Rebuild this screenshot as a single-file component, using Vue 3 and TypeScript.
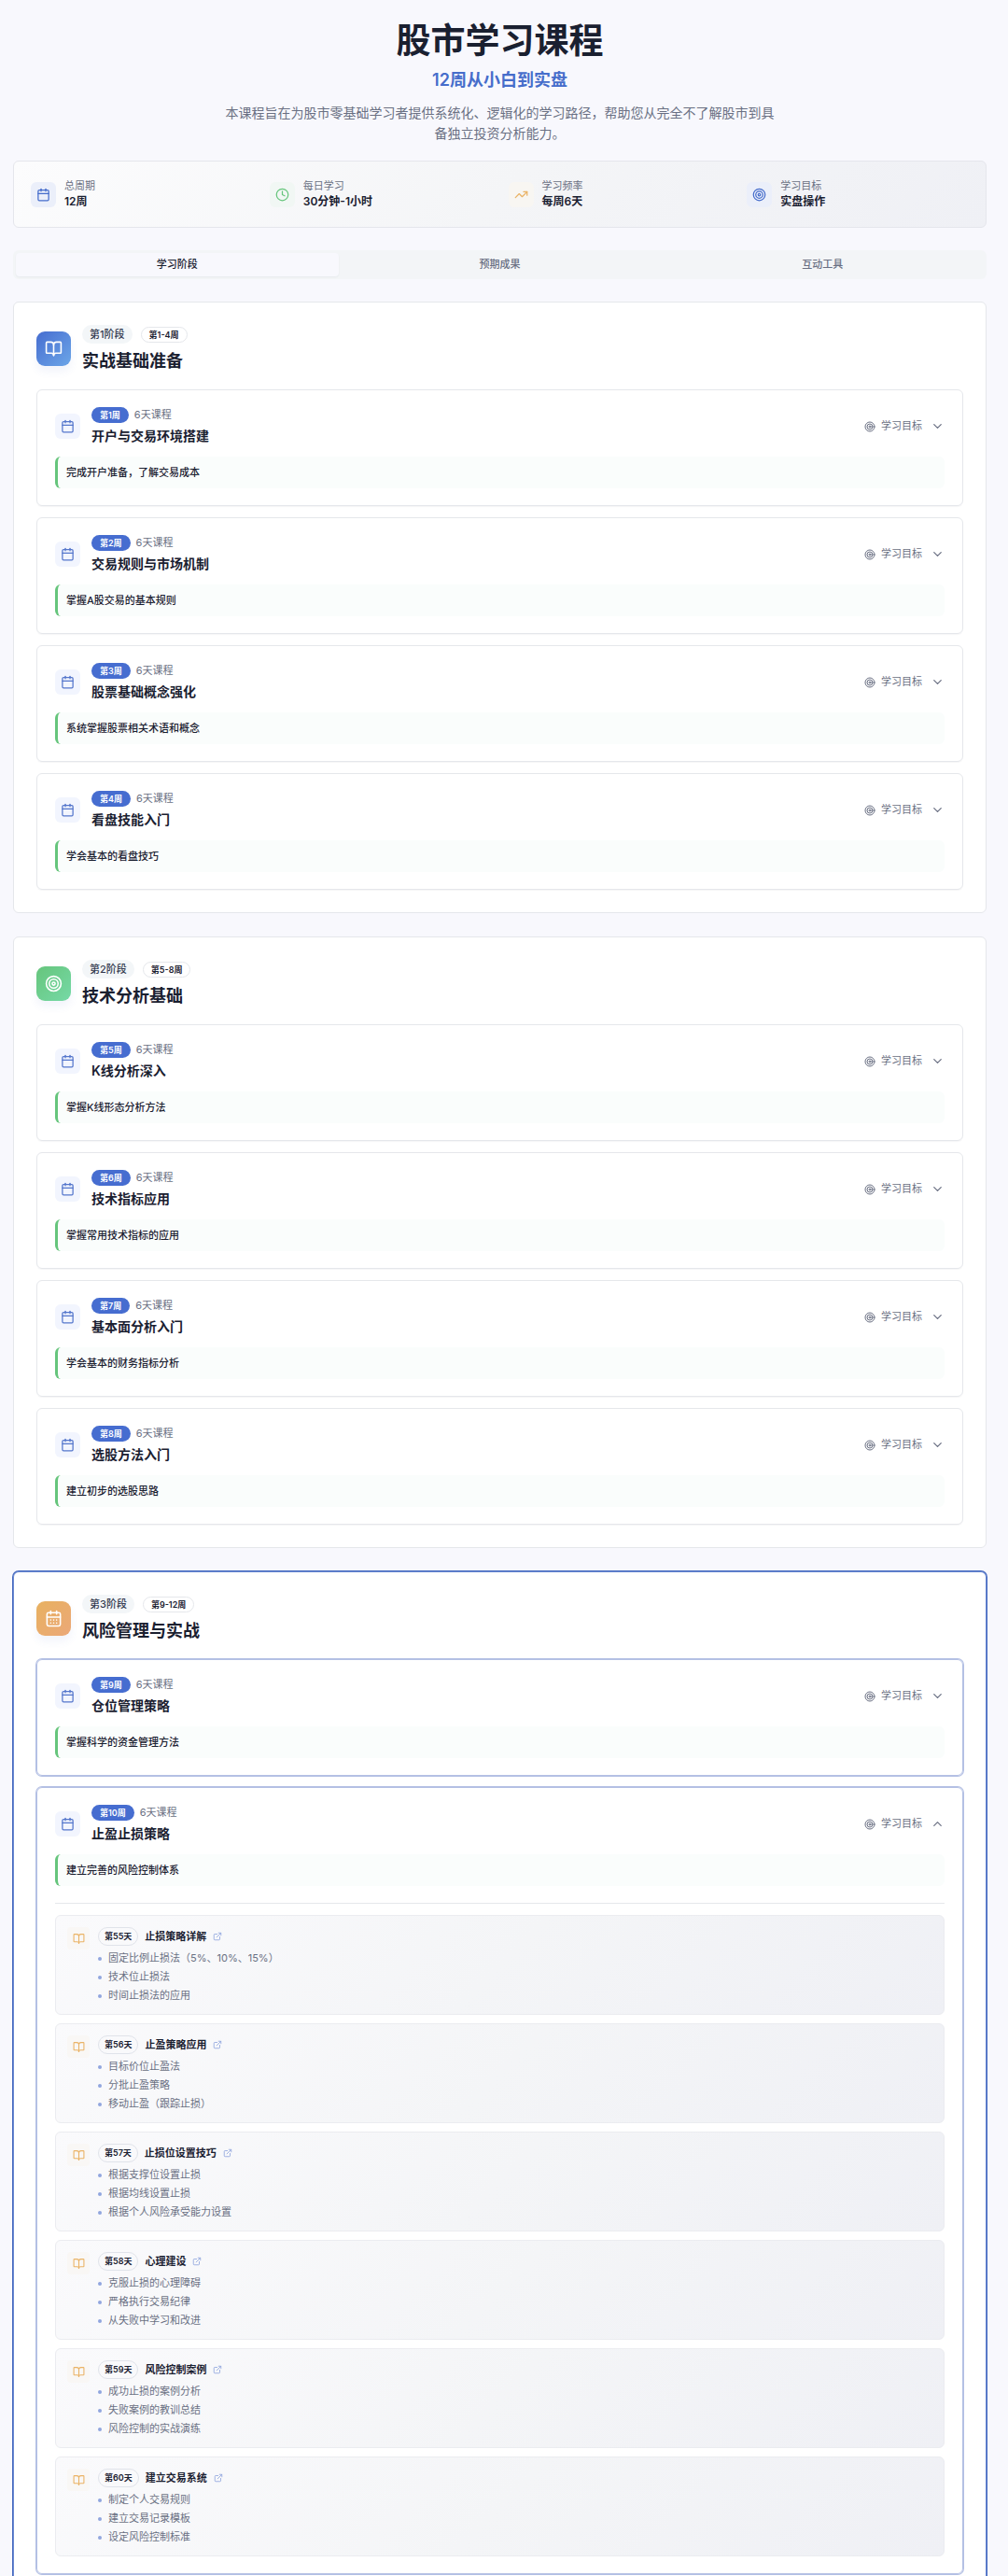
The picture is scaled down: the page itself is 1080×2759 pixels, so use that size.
<script setup lang="ts">
import { ref, reactive, h, type FunctionalComponent } from 'vue'

type IconName =
  | 'calendar'
  | 'calendarDays'
  | 'clock'
  | 'trend'
  | 'target'
  | 'book'
  | 'link'
  | 'down'
  | 'up'

interface Day {
  day: number
  title: string
  points: string[]
}

interface Week {
  week: number
  title: string
  goal: string
  days?: Day[]
}

interface Phase {
  id: number
  range: string
  title: string
  icon: IconName
  tone: string
  current?: boolean
  weeks: Week[]
}

type Shape = [string, Record<string, string | number>]

const path = (d: string): Shape => ['path', { d }]
const circle = (r: number): Shape => ['circle', { cx: 12, cy: 12, r }]
const frame: Shape[] = [
  path('M8 2v4'),
  path('M16 2v4'),
  ['rect', { x: 3, y: 4, width: 18, height: 18, rx: 2 }],
  path('M3 10h18'),
]

const shapes: Record<IconName, Shape[]> = {
  calendar: frame,
  calendarDays: [
    ...frame,
    path('M8 14h.01'),
    path('M12 14h.01'),
    path('M16 14h.01'),
    path('M8 18h.01'),
    path('M12 18h.01'),
    path('M16 18h.01'),
  ],
  clock: [circle(10), path('M12 6v6l4 2')],
  trend: [path('M16 7h6v6'), path('m22 7-8.5 8.5-5-5L2 17')],
  target: [circle(10), circle(6), circle(2)],
  book: [
    path('M12 7v14'),
    path(
      'M3 18a1 1 0 0 1-1-1V4a1 1 0 0 1 1-1h5a4 4 0 0 1 4 4 4 4 0 0 1 4-4h5a1 1 0 0 1 1 1v13a1 1 0 0 1-1 1h-6a3 3 0 0 0-3 3 3 3 0 0 0-3-3z',
    ),
  ],
  link: [
    path('M15 3h6v6'),
    path('M10 14 21 3'),
    path('M18 13v6a2 2 0 0 1-2 2H5a2 2 0 0 1-2-2V8a2 2 0 0 1 2-2h6'),
  ],
  down: [path('m6 9 6 6 6-6')],
  up: [path('m18 15-6-6-6 6')],
}

const Icon: FunctionalComponent<{ name: IconName; size: number }> = (props) =>
  h(
    'svg',
    {
      width: props.size,
      height: props.size,
      viewBox: '0 0 24 24',
      fill: 'none',
      stroke: 'currentColor',
      'stroke-width': 2,
      'stroke-linecap': 'round',
      'stroke-linejoin': 'round',
      'aria-hidden': 'true',
    },
    shapes[props.name].map(([tag, attrs]) => h(tag, attrs)),
  )
Icon.props = ['name', 'size']

const stats: { label: string; value: string; icon: IconName; tone: string }[] = [
  { label: '总周期', value: '12周', icon: 'calendar', tone: 'blue' },
  { label: '每日学习', value: '30分钟-1小时', icon: 'clock', tone: 'green' },
  { label: '学习频率', value: '每周6天', icon: 'trend', tone: 'amber' },
  { label: '学习目标', value: '实盘操作', icon: 'target', tone: 'blue' },
]

const tabs = ['学习阶段', '预期成果', '互动工具']
const activeTab = ref(0)

const phases: Phase[] = [
  {
    id: 1,
    range: '第1-4周',
    title: '实战基础准备',
    icon: 'book',
    tone: 'blue',
    weeks: [
      { week: 1, title: '开户与交易环境搭建', goal: '完成开户准备，了解交易成本' },
      { week: 2, title: '交易规则与市场机制', goal: '掌握A股交易的基本规则' },
      { week: 3, title: '股票基础概念强化', goal: '系统掌握股票相关术语和概念' },
      { week: 4, title: '看盘技能入门', goal: '学会基本的看盘技巧' },
    ],
  },
  {
    id: 2,
    range: '第5-8周',
    title: '技术分析基础',
    icon: 'target',
    tone: 'green',
    weeks: [
      { week: 5, title: 'K线分析深入', goal: '掌握K线形态分析方法' },
      { week: 6, title: '技术指标应用', goal: '掌握常用技术指标的应用' },
      { week: 7, title: '基本面分析入门', goal: '学会基本的财务指标分析' },
      { week: 8, title: '选股方法入门', goal: '建立初步的选股思路' },
    ],
  },
  {
    id: 3,
    range: '第9-12周',
    title: '风险管理与实战',
    icon: 'calendarDays',
    tone: 'amber',
    current: true,
    weeks: [
      { week: 9, title: '仓位管理策略', goal: '掌握科学的资金管理方法' },
      {
        week: 10,
        title: '止盈止损策略',
        goal: '建立完善的风险控制体系',
        days: [
          { day: 55, title: '止损策略详解', points: ['固定比例止损法（5%、10%、15%）', '技术位止损法', '时间止损法的应用'] },
          { day: 56, title: '止盈策略应用', points: ['目标价位止盈法', '分批止盈策略', '移动止盈（跟踪止损）'] },
          { day: 57, title: '止损位设置技巧', points: ['根据支撑位设置止损', '根据均线设置止损', '根据个人风险承受能力设置'] },
          { day: 58, title: '心理建设', points: ['克服止损的心理障碍', '严格执行交易纪律', '从失败中学习和改进'] },
          { day: 59, title: '风险控制案例', points: ['成功止损的案例分析', '失败案例的教训总结', '风险控制的实战演练'] },
          { day: 60, title: '建立交易系统', points: ['制定个人交易规则', '建立交易记录模板', '设定风险控制标准'] },
        ],
      },
    ],
  },
]

const open = reactive<Record<number, boolean>>({ 10: true })
const toggle = (week: number) => {
  open[week] = !open[week]
}
</script>

<template>
  <main class="page">
    <header class="hero">
      <h1>股市学习课程</h1>
      <p class="subtitle">12周从小白到实盘</p>
      <p class="intro">
        本课程旨在为股市零基础学习者提供系统化、逻辑化的学习路径，帮助您从完全不了解股市到具备独立投资分析能力。
      </p>
    </header>

    <section class="stats">
      <div v-for="s in stats" :key="s.label" class="stat">
        <span class="tile" :class="s.tone"><Icon :name="s.icon" :size="15" /></span>
        <div>
          <div class="stat-label">{{ s.label }}</div>
          <div class="stat-value">{{ s.value }}</div>
        </div>
      </div>
    </section>

    <div class="tabs" role="tablist">
      <button
        v-for="(t, i) in tabs"
        :key="t"
        type="button"
        role="tab"
        class="tab"
        :class="{ active: activeTab === i }"
        :aria-selected="activeTab === i"
        @click="activeTab = i"
      >
        {{ t }}
      </button>
    </div>

    <div class="phases">
      <section v-for="p in phases" :key="p.id" class="phase" :class="{ current: p.current }">
        <div class="phase-head">
          <span class="phase-icon" :class="p.tone"><Icon :name="p.icon" :size="19" /></span>
          <div>
            <div class="phase-tags">
              <span class="phase-no">第{{ p.id }}阶段</span>
              <span class="phase-range">{{ p.range }}</span>
            </div>
            <h2>{{ p.title }}</h2>
          </div>
        </div>

        <div class="weeks">
          <article v-for="w in p.weeks" :key="w.week" class="week">
            <div class="week-head">
              <span class="tile pale"><Icon name="calendar" :size="15" /></span>
              <div class="week-text">
                <div class="week-meta">
                  <span class="week-no">第{{ w.week }}周</span>
                  <span class="week-days">6天课程</span>
                </div>
                <h3>{{ w.title }}</h3>
              </div>
              <button type="button" class="toggle" :aria-expanded="!!open[w.week]" @click="toggle(w.week)">
                <Icon name="target" :size="12" />
                <span>学习目标</span>
                <Icon class="chevron" :name="open[w.week] ? 'up' : 'down'" :size="15" />
              </button>
            </div>
            <p class="goal">{{ w.goal }}</p>

            <div v-if="w.days && open[w.week]" class="days">
              <div v-for="d in w.days" :key="d.day" class="day">
                <span class="day-icon"><Icon name="book" :size="13" /></span>
                <div>
                  <a class="day-head" href="#">
                    <span class="day-no">第{{ d.day }}天</span>
                    <span class="day-title">{{ d.title }}</span>
                    <Icon name="link" :size="10" />
                  </a>
                  <ul>
                    <li v-for="pt in d.points" :key="pt">{{ pt }}</li>
                  </ul>
                </div>
              </div>
            </div>
          </article>
        </div>
      </section>
    </div>
  </main>
</template>

<style>
body {
  background: #f8f8fd;
}
</style>

<style scoped>
.page {
  box-sizing: border-box;
  height: 100vh;
  overflow-y: auto;
  scrollbar-width: none;
  padding: 24px 23px 24px 14px;
  background: #f8f8fd;
  color: #1a2030;
  font-family: Inter, 'Noto Sans CJK SC', sans-serif;
  font-size: 11px;
  line-height: 15px;
}

.page *,
.page *::before {
  box-sizing: border-box;
}

h1,
h2,
h3,
p,
ul {
  margin: 0;
  padding: 0;
}

svg {
  display: block;
  flex: none;
}

button {
  border: 0;
  padding: 0;
  background: none;
  font: inherit;
  cursor: pointer;
}

.hero {
  text-align: center;
}

h1 {
  font-size: 37px;
  line-height: 40px;
  font-weight: 700;
}

.subtitle {
  margin-top: 10px;
  color: #466dcb;
  font-size: 18px;
  line-height: 24px;
  font-weight: 600;
}

.intro {
  max-width: 590px;
  margin: 12px auto 0;
  color: #6a7083;
  font-size: 14px;
  line-height: 22px;
}

.stats {
  display: grid;
  grid-template-columns: repeat(4, 1fr);
  gap: 18px;
  margin-top: 18px;
  padding: 18px;
  border: 1px solid #e5e6ec;
  border-radius: 6px;
  background: linear-gradient(135deg, #fcfcfd, #f4f5f7 50%, #eff0f5);
}

.stat {
  display: flex;
  align-items: center;
  gap: 9px;
}

.stat-label {
  color: #6a7083;
  line-height: 16px;
}

.stat-value {
  font-size: 12px;
  line-height: 18px;
  font-weight: 600;
}

.tile {
  display: flex;
  flex: none;
  align-items: center;
  justify-content: center;
  width: 27px;
  height: 27px;
  border-radius: 6px;
}

.tile.blue {
  background: #ebeffa;
  color: #466dcb;
}

.tile.pale {
  background: #f2f5fe;
  color: #5577cc;
}

.tile.green {
  background: #f1f7f4;
  color: #66c57c;
}

.tile.amber {
  background: #f8f6f2;
  color: #eab366;
}

.tabs {
  display: grid;
  grid-template-columns: repeat(3, 1fr);
  margin-top: 24px;
  padding: 3px;
  border-radius: 6px;
  background: #f3f5f7;
}

.tab {
  height: 25px;
  border-radius: 4px;
  color: #6a7083;
  font-weight: 500;
}

.tab.active {
  background: #f8f8fd;
  color: #1a2030;
  box-shadow: 0 1px 2px rgba(20, 30, 60, 0.05);
}

.phases {
  display: flex;
  flex-direction: column;
  gap: 25px;
  margin-top: 24px;
}

.phase {
  padding: 24px;
  border: 1px solid #e5e7eb;
  border-radius: 6px;
  background: #fff;
}

.phase.current {
  border-color: #6c8ad2;
  box-shadow: 0 0 0 1px #4468be;
}

.phase-head {
  display: flex;
  align-items: center;
  gap: 12px;
  margin-bottom: 18px;
}

.phase-icon {
  display: flex;
  align-items: center;
  justify-content: center;
  width: 37px;
  height: 37px;
  border-radius: 9px;
  color: #fff;
  box-shadow: 0 6px 10px rgba(70, 100, 200, 0.07);
}

.phase-icon.blue {
  background: linear-gradient(135deg, #466dd0, #6ca6e8);
}

.phase-icon.green {
  background: linear-gradient(135deg, #66c57c, #76d9a6);
}

.phase-icon.amber {
  background: linear-gradient(135deg, #e8b160, #eba878);
}

.phase-tags {
  display: flex;
  align-items: center;
  gap: 9px;
}

.phase-no {
  padding: 0 8px;
  border-radius: 10px;
  background: #f3f6f8;
  color: #343b50;
  line-height: 20px;
  font-weight: 500;
}

.phase-range {
  padding: 0 8px;
  border: 1px solid #e5e7eb;
  border-radius: 9px;
  font-size: 9px;
  line-height: 15px;
  font-weight: 600;
}

h2 {
  margin-top: 6px;
  font-size: 18px;
  line-height: 25px;
  font-weight: 600;
}

.weeks {
  display: flex;
  flex-direction: column;
  gap: 12px;
}

.week {
  padding: 18px 19px;
  border: 1px solid #e5e7eb;
  border-radius: 6px;
  box-shadow: 0 1px 1px rgba(20, 30, 60, 0.04);
}

.current .week {
  border-color: #b4c0e4;
  box-shadow: 0 0 0 1px #b4c0e4;
}

.week-head {
  display: flex;
  align-items: center;
  gap: 12px;
}

.week-text {
  flex: 1;
}

.week-meta {
  display: flex;
  align-items: center;
  gap: 6px;
}

.week-no {
  padding: 0 9px;
  border-radius: 9px;
  background: #466dd0;
  color: #fff;
  font-size: 9px;
  line-height: 17px;
  font-weight: 600;
}

.week-days {
  color: #6a7083;
}

h3 {
  margin-top: 3px;
  font-size: 14px;
  line-height: 21px;
  font-weight: 600;
}

.toggle {
  display: flex;
  align-items: center;
  gap: 6px;
  color: #6a7083;
}

.chevron {
  margin-left: 3px;
}

.goal {
  margin-top: 12px;
  padding: 0 9px;
  border-left: 3px solid #66c57c;
  border-radius: 6px;
  background: #fafdfc;
  line-height: 34px;
  font-weight: 500;
}

.days {
  display: flex;
  flex-direction: column;
  gap: 9px;
  margin-top: 18px;
  padding-top: 12px;
  border-top: 1px solid #e5e7eb;
}

.day {
  display: flex;
  gap: 9px;
  padding: 12px;
  border: 1px solid #ebecf0;
  border-radius: 6px;
  background: linear-gradient(135deg, #fafafc, #f4f5f7 50%, #eff0f5);
}

.day-icon {
  display: flex;
  flex: none;
  align-items: center;
  justify-content: center;
  width: 24px;
  height: 24px;
  border-radius: 4px;
  background: #f9f7f5;
  color: #eab366;
}

.day-head {
  display: flex;
  align-items: center;
  gap: 7px;
  color: #8fa5dd;
  text-decoration: none;
}

.day-no {
  padding: 0 6px;
  border: 1px solid #e0e3ea;
  border-radius: 10px;
  color: #1a2030;
  font-size: 9px;
  line-height: 18px;
  font-weight: 600;
}

.day-title {
  color: #1a2030;
  font-weight: 600;
}

ul {
  display: flex;
  flex-direction: column;
  gap: 5px;
  margin-top: 6px;
  list-style: none;
}

li {
  display: flex;
  align-items: center;
  gap: 7px;
  color: #6a7083;
}

li::before {
  content: '';
  width: 4px;
  height: 4px;
  border-radius: 50%;
  background: #91a6de;
}
</style>
